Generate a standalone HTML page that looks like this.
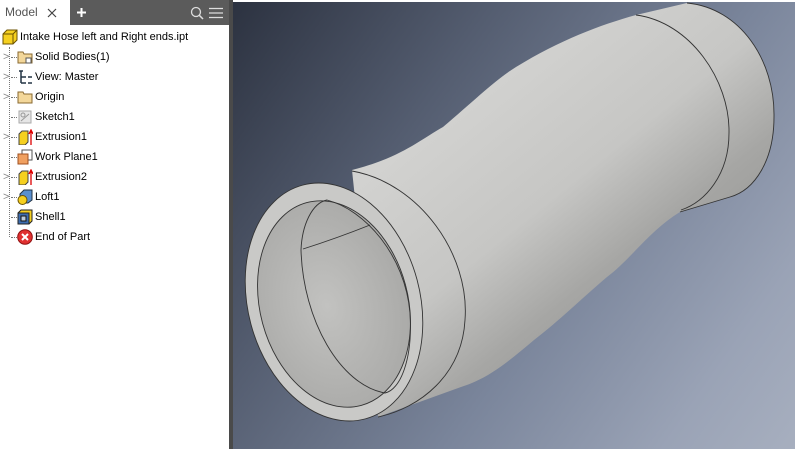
<!DOCTYPE html>
<html><head><meta charset="utf-8"><style>
html,body{margin:0;width:795px;height:449px;overflow:hidden}
body{position:relative;background:#fff;font-family:Tahoma,"Liberation Sans",sans-serif;font-size:11px;color:#000}
.hdr{position:absolute;left:70px;top:0;width:159px;height:25px;background:#5b5b5b}
.tab{position:absolute;left:0;top:0;width:70px;height:25px;background:#fff}
.strip{position:absolute;left:229px;top:0;width:4px;height:449px;background:#4a4a4a}
.vp{position:absolute;left:233px;top:2px;width:562px;height:447px;background:linear-gradient(125deg,#2c3240 0%,#545d70 30%,#7a859b 60%,#9aa3b6 85%,#a7afbf 100%)}
.row{position:absolute;left:0;height:20px;line-height:20px;white-space:nowrap}
.txt{position:absolute;left:35px;top:0}
.chev{position:absolute;left:3px;top:0;color:#888;font-size:11px}
.dot{position:absolute;left:11px;top:10px;width:6px;border-top:1px dotted #777}
.ic{position:absolute;left:17px;top:2px;width:16px;height:16px}
</style></head><body>
<div class="tab"><span style="position:absolute;left:5px;top:5px;color:#555;font-size:12px">Model</span>
<svg style="position:absolute;left:47px;top:8px" width="10" height="10"><path d="M1 1L9 9M9 1L1 9" stroke="#444" stroke-width="1.2"/></svg></div>
<div class="hdr">
<svg style="position:absolute;left:6px;top:7px" width="11" height="11"><path d="M5.5 1V10M1 5.5H10" stroke="#fff" stroke-width="2"/></svg>
<svg style="position:absolute;left:120px;top:6px" width="14" height="14"><circle cx="6" cy="6" r="4.5" fill="none" stroke="#ddd" stroke-width="1.3"/><path d="M9.3 9.3L13 13" stroke="#ddd" stroke-width="1.5"/></svg>
<svg style="position:absolute;left:139px;top:7px" width="14" height="12"><path d="M0 1.5H14M0 6H14M0 10.5H14" stroke="#ddd" stroke-width="1.2"/></svg>
</div>
<div style="position:absolute;left:9px;top:47px;height:190px;border-left:1px dotted #777"></div>
<div class="row" style="top:27px"><svg style="position:absolute;left:1px;top:1px" width="18" height="18"><path d="M2 6L6 2H16V12L12 16H2Z" fill="#f5d020" stroke="#6b5200"/><path d="M2 6H12V16M12 6L16 2" fill="none" stroke="#6b5200"/></svg><span style="position:absolute;left:20px">Intake Hose left and Right ends.ipt</span></div>
<div class="row" style="top:47px"><span class="chev">&gt;</span><div class="dot"></div><svg class="ic" viewBox="0 0 16 16"><path d="M1 3H6L7 5H15V14H1Z" fill="#f3d79a" stroke="#8a6a30"/><rect x="9" y="9" width="5" height="5" fill="#fff" stroke="#555"/></svg><span class="txt">Solid Bodies(1)</span></div>
<div class="row" style="top:67px"><span class="chev">&gt;</span><div class="dot"></div><svg class="ic" viewBox="0 0 16 16"><path d="M2 2H6M4 2V14M4 8H9M4 14H9M11 8H15M11 14H15" stroke="#234" stroke-width="1.5" fill="none"/></svg><span class="txt">View: Master</span></div>
<div class="row" style="top:87px"><span class="chev">&gt;</span><div class="dot"></div><svg class="ic" viewBox="0 0 16 16"><path d="M1 3H6L7 5H15V14H1Z" fill="#f3d79a" stroke="#8a6a30"/></svg><span class="txt">Origin</span></div>
<div class="row" style="top:107px"><div class="dot"></div><svg class="ic" viewBox="0 0 16 16"><rect x="2" y="2" width="12" height="12" fill="#e6e6e6" stroke="#aaa"/><circle cx="6" cy="6" r="2" fill="none" stroke="#999"/><path d="M4 12L12 5" stroke="#999"/></svg><span class="txt">Sketch1</span></div>
<div class="row" style="top:127px"><span class="chev">&gt;</span><div class="dot"></div><svg class="ic" viewBox="0 0 16 16"><path d="M2 5L5 2H11V13L8 16H2Z" fill="#f5d020" stroke="#444"/><path d="M14 16V2M12 5L14 1L16 5" stroke="#d00" stroke-width="1.3" fill="none"/></svg><span class="txt">Extrusion1</span></div>
<div class="row" style="top:147px"><div class="dot"></div><svg class="ic" viewBox="0 0 16 16"><rect x="5" y="1" width="10" height="10" fill="#fff" stroke="#555"/><rect x="1" y="5" width="10" height="10" fill="#f0a060" stroke="#a05020"/></svg><span class="txt">Work Plane1</span></div>
<div class="row" style="top:167px"><span class="chev">&gt;</span><div class="dot"></div><svg class="ic" viewBox="0 0 16 16"><path d="M2 5L5 2H11V13L8 16H2Z" fill="#f5d020" stroke="#444"/><path d="M14 16V2M12 5L14 1L16 5" stroke="#d00" stroke-width="1.3" fill="none"/></svg><span class="txt">Extrusion2</span></div>
<div class="row" style="top:187px"><span class="chev">&gt;</span><div class="dot"></div><svg class="ic" viewBox="0 0 16 16"><path d="M3 5L7 1H15V11L11 14H3Z" fill="#5a90d0" stroke="#234"/><circle cx="5.5" cy="11" r="4.5" fill="#f5d020" stroke="#6b5200"/></svg><span class="txt">Loft1</span></div>
<div class="row" style="top:207px"><div class="dot"></div><svg class="ic" viewBox="0 0 16 16"><path d="M1 4L4 1H15V12L12 15H1Z" fill="#f5d020" stroke="#222"/><rect x="1" y="4" width="11" height="11" fill="#3d6db0" stroke="#222"/><rect x="4" y="7" width="5" height="5" fill="#bcd" stroke="#111"/></svg><span class="txt">Shell1</span></div>
<div class="row" style="top:227px"><div class="dot"></div><svg class="ic" viewBox="0 0 16 16"><circle cx="8" cy="8" r="7.3" fill="#e03030" stroke="#901010"/><path d="M5 5L11 11M11 5L5 11" stroke="#fff" stroke-width="2"/></svg><span class="txt">End of Part</span></div>
<div class="strip"></div>
<div class="vp"></div>
<svg style="position:absolute;left:0;top:0" width="795" height="449">
<defs>
<linearGradient id="bg" x1="0.3" y1="0.2" x2="0.75" y2="0.75"><stop offset="0" stop-color="#d2d2d0"/><stop offset="0.45" stop-color="#c6c6c4"/><stop offset="0.75" stop-color="#a6a6a4"/><stop offset="1" stop-color="#9a9a98"/></linearGradient>
<radialGradient id="ig" cx="0.45" cy="0.5" r="0.6"><stop offset="0" stop-color="#c2c2c0"/><stop offset="1" stop-color="#a8a8a6"/></radialGradient>
</defs>
<path d="M352 170 C400 158 420 140 443 127 C475 100 495 80 516 67 C560 40 600 25 636 15 L687 3 C740 8 775 60 774 117 C774 160 755 190 730 197 L680 212 C650 230 630 260 607 277 C580 300 560 320 534 340 C510 360 490 378 461 387 L378 417 Z" fill="url(#bg)"/>
<path d="M687 3 C740 8 775 60 774 117 C774 160 755 190 730 197 L680 212" fill="none" stroke="#333" stroke-width="0.9"/>
<path d="M636 15 C690 22 730 80 729 133 C729 175 705 202 681 210" fill="none" stroke="#333" stroke-width="0.9"/>
<path d="M352 171 C420 183 470 255 465 320 C462 375 420 408 378 417" fill="none" stroke="#333" stroke-width="0.9"/>
<ellipse cx="334" cy="302" rx="86" ry="121" transform="rotate(-15 334 302)" fill="#c9c9c7" stroke="#333" stroke-width="0.9"/>
<ellipse cx="334" cy="304" rx="74" ry="105" transform="rotate(-15 334 304)" fill="url(#ig)" stroke="#333" stroke-width="0.9"/>
<path d="M327 200 C365 210 405 255 410 313 C413 360 400 390 385 393 C340 385 303 320 301 250 C302 225 312 203 327 200Z" fill="none" stroke="#333" stroke-width="0.9"/>
<path d="M303 249 C325 242 345 235 370 225" fill="none" stroke="#333" stroke-width="0.9"/>
</svg>
</body></html>
